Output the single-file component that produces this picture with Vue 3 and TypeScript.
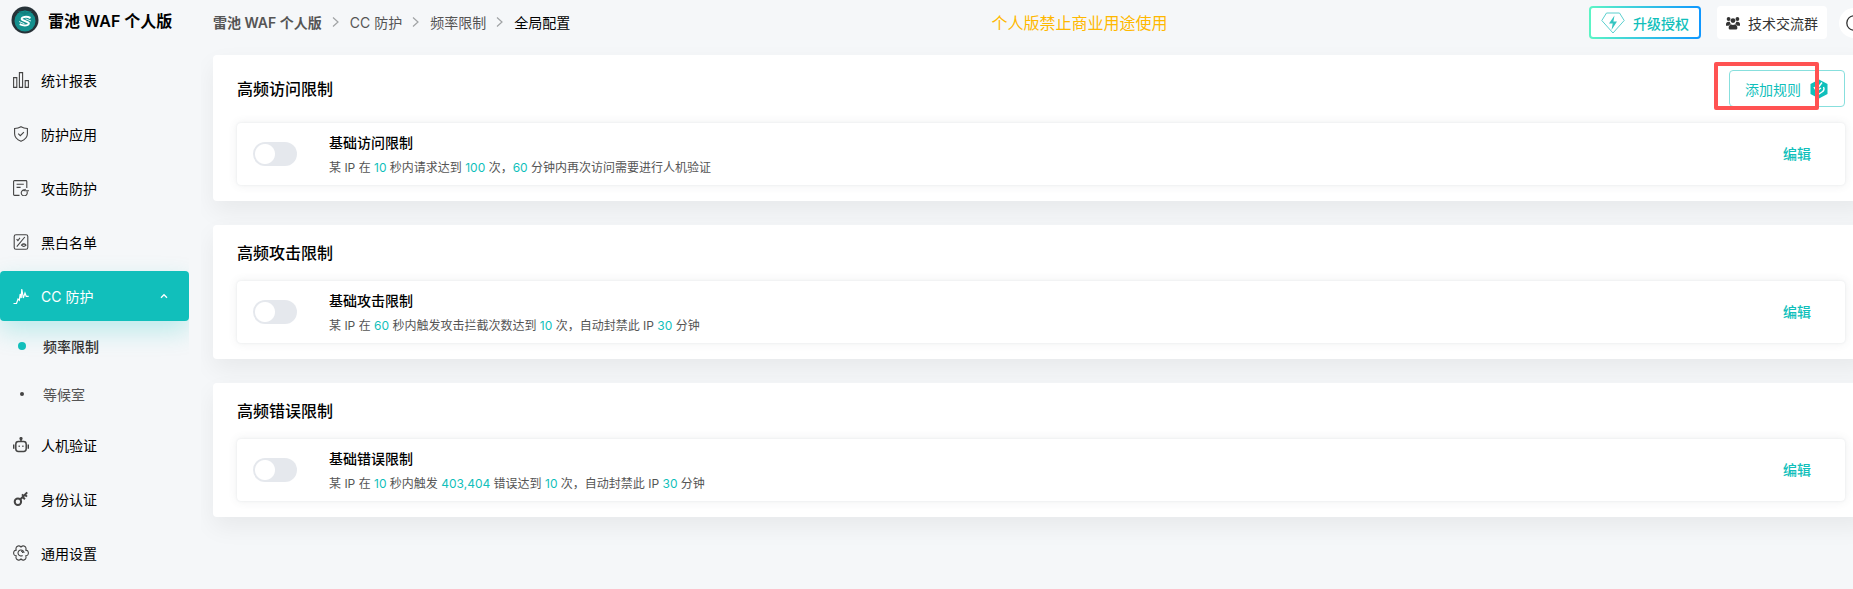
<script setup lang="ts">
import { ref } from 'vue'

interface NavItem {
  label: string
  icon: string
  active?: boolean
  children?: { label: string; current: boolean }[]
}
interface Part {
  text: string
  hot?: boolean
}
interface Rule {
  id: string
  title: string
  name: string
  parts: Part[]
  addable?: boolean
}

const nav: NavItem[] = [
  { label: '统计报表', icon: 'chart' },
  { label: '防护应用', icon: 'shield' },
  { label: '攻击防护', icon: 'attack' },
  { label: '黑白名单', icon: 'list' },
  {
    label: 'CC 防护',
    icon: 'pulse',
    active: true,
    children: [
      { label: '频率限制', current: true },
      { label: '等候室', current: false },
    ],
  },
  { label: '人机验证', icon: 'robot' },
  { label: '身份认证', icon: 'key' },
  { label: '通用设置', icon: 'gear' },
]

const crumbs: string[] = ['雷池 WAF 个人版', 'CC 防护', '频率限制']

const rules: Rule[] = [
  {
    id: 'visit',
    title: '高频访问限制',
    name: '基础访问限制',
    addable: true,
    parts: [
      { text: '某 IP 在 ' },
      { text: '10', hot: true },
      { text: ' 秒内请求达到 ' },
      { text: '100', hot: true },
      { text: ' 次，' },
      { text: '60', hot: true },
      { text: ' 分钟内再次访问需要进行人机验证' },
    ],
  },
  {
    id: 'attack',
    title: '高频攻击限制',
    name: '基础攻击限制',
    parts: [
      { text: '某 IP 在 ' },
      { text: '60', hot: true },
      { text: ' 秒内触发攻击拦截次数达到 ' },
      { text: '10', hot: true },
      { text: ' 次，自动封禁此 IP ' },
      { text: '30', hot: true },
      { text: ' 分钟' },
    ],
  },
  {
    id: 'error',
    title: '高频错误限制',
    name: '基础错误限制',
    parts: [
      { text: '某 IP 在 ' },
      { text: '10', hot: true },
      { text: ' 秒内触发 ' },
      { text: '403,404', hot: true },
      { text: ' 错误达到 ' },
      { text: '10', hot: true },
      { text: ' 次，自动封禁此 IP ' },
      { text: '30', hot: true },
      { text: ' 分钟' },
    ],
  },
]

const enabled = ref<Record<string, boolean>>({ visit: false, attack: false, error: false })
</script>

<template>
  <div class="app">
    <aside class="sidebar">
      <div class="brand">
        <svg class="logo" viewBox="0 0 28 28" aria-hidden="true">
          <circle cx="14" cy="14" r="13.5" fill="#263238" />
          <circle cx="14" cy="15" r="10.5" fill="#14908e" />
          <path d="M7 5.200q4 .2 5.500 1.300L14 4l1.500 2.500Q17 5.400 21 5.200q-2 2.600-5 2.800L14 10l-2-2q-3-.2-5-2.800z" fill="#13807f" />
          <path d="M19.500 12q-4-2-7.500-.6-2.300 1.200-.6 2.500l5.600 2.500q1.900 1.200-.3 2.400-3.300 1.500-8-.7" fill="none" stroke="#fff" stroke-width="2" />
          <path d="M8 15.500l5.500 2.300M14.500 12.800l5.500 2.200" stroke="#d8f3f2" stroke-width="1" />
        </svg>
        <span>雷池 WAF 个人版</span>
      </div>
      <nav>
        <template v-for="item in nav" :key="item.label">
          <a href="#" class="nav-item" :class="{ active: item.active }">
            <svg class="nav-icon" viewBox="0 0 16 16" aria-hidden="true">
              <g v-if="item.icon === 'chart'">
                <path d="M.6 5.600h3.200v9.800H.6zM6.400.6h3.200v14.800H6.400zM12.200 8.600h3.200v6.800h-3.200z" />
              </g>
              <g v-else-if="item.icon === 'shield'">
                <path d="M8 .7c2 1.200 4 1.700 6.400 1.800v5.300c0 3.600-2.600 6-6.400 7.500-3.800-1.500-6.400-3.900-6.400-7.500V2.500C4 2.400 6 1.900 8 .7z" />
                <path d="M5.200 7.600l2.100 2.100 3.600-3.600" />
              </g>
              <g v-else-if="item.icon === 'attack'">
                <path d="M13.800 8V1.500a.9.900 0 0 0-.9-.9H1.500a.9.900 0 0 0-.9.900v13a.9.900 0 0 0 .9.900H6.500M3.600 4.200h7.200M3.600 7.400h4" />
                <path d="M13.900 11.500a3 3 0 1 1-2.400-1.600M10.800 11.200l1.800-2.200M12.200 10.700h3.800" />
              </g>
              <g v-else-if="item.icon === 'list'">
                <rect x="1.200" y=".7" width="13.600" height="14.600" rx="1.800" />
                <path d="M3.800 12.600L11.800 3M3.600 5.200l1.300 1.500 2-2.800" />
                <path d="M8.500 11.200q2.200-2.600 4.500 0-2.300 2.600-4.500 0zM10.700 11.100h.1" />
              </g>
              <g v-else-if="item.icon === 'pulse'" class="spikes">
                <path d="M.5 15.500h3L5 11l1.300 1.200L7.200 6l1 4L8.800 1l1.500 9 1.700-5 1.200 3.300h2.500" />
              </g>
              <g v-else-if="item.icon === 'robot'" class="bold">
                <rect x="2.800" y="4.600" width="10.400" height="9.800" rx="2.600" />
                <path d="M8 4.600V1.500M.7 7.500v4.200M15.300 7.500v4.200M5.600 9.300h1.200M9.300 9.300h1.200" />
                <circle cx="8" cy="1.600" r=".9" />
              </g>
              <g v-else-if="item.icon === 'key'" class="heavy">
                <circle cx="4.900" cy="10.800" r="3.200" />
                <path d="M7.200 8.500L14.200 1.400M9.700 6l2.200 2.200M12 3.700l1.900 1.900M9 3.400l1 1" />
              </g>
              <g v-else>
                <path d="M4.900 1.100q1.500-.6 3.100.9 1.600-1.500 3.100-.9l1.400.9q.9 1.300.3 3.100 2.200.4 2.500 1.900v2q-.3 1.500-2.500 1.900.6 1.800-.3 3.100l-1.400.9q-1.500.6-3.100-.9-1.600 1.500-3.100.9L3.500 14q-.9-1.300-.3-3.100Q1 10.500.7 9V7Q1 5.500 3.200 5.100q-.6-1.800.3-3.100z" />
                <path d="M9.600 10.500A3 3 0 1 1 11 8M8 6.300q1.700 0 1.700 1.700" />
              </g>
            </svg>
            <span class="nav-label">{{ item.label }}</span>
            <svg v-if="item.children" class="caret" viewBox="0 0 8 6" aria-hidden="true">
              <path d="M1 4.700L4 1.700l3 3" fill="none" stroke="#fff" stroke-width="1.300" />
            </svg>
          </a>
          <div v-if="item.children" class="sub">
            <a v-for="child in item.children" :key="child.label" href="#" class="sub-item" :class="{ current: child.current }">
              <span class="dot"></span>
              <span>{{ child.label }}</span>
            </a>
          </div>
        </template>
      </nav>
    </aside>

    <main class="main">
      <header class="topbar">
        <div class="crumbs">
          <template v-for="(crumb, i) in crumbs" :key="crumb">
            <a href="#" class="crumb" :class="{ root: i === 0 }">{{ crumb }}</a>
            <svg class="sep" viewBox="0 0 8 12" aria-hidden="true">
              <path d="M1 1.500L6 6l-5 4.500" fill="none" stroke="#a0a3a5" stroke-width="1.200" />
            </svg>
          </template>
          <span class="here">全局配置</span>
        </div>
        <div class="notice">个人版禁止商业用途使用</div>
        <div class="actions">
          <button type="button" class="upgrade">
            <svg viewBox="0 0 24 22" aria-hidden="true">
              <path d="M5.500 1h13L23.200 8.500 12 21 .8 8.500z" fill="none" stroke="#5bcfce" />
              <path d="M13.500 3.500L8 11.500h3.700L10.500 18 16 9.600h-3.600z" fill="#35c5c1" />
            </svg>
            <span>升级授权</span>
          </button>
          <button type="button" class="group">
            <svg viewBox="0 0 14 14" aria-hidden="true">
              <circle cx="2.600" cy="3" r="1.900" />
              <circle cx="11.400" cy="3" r="1.900" />
              <circle cx="7" cy="4.600" r="2.400" />
              <path d="M0 8.300q0-2.600 2.600-2.600h1.100Q4 7.500 5.200 8.200 3.200 8.500 2.600 9.700H0zM14 8.300q0-2.600-2.600-2.600h-1.100Q10 7.500 8.800 8.200q2 .3 2.600 1.500H14zM2.700 12.500V11q.3-2.200 2.600-2.400 1.700.8 3.400 0 2.300.2 2.600 2.400v1.500q-.2 1-1.200 1H3.900q-1 0-1.200-1z" />
            </svg>
            <span>技术交流群</span>
          </button>
          <button type="button" class="help" aria-label="帮助">
            <svg viewBox="0 0 16 16" aria-hidden="true">
              <circle cx="8" cy="8" r="7.200" fill="none" stroke="#333" stroke-width="1.300" />
            </svg>
          </button>
        </div>
      </header>

      <section v-for="rule in rules" :key="rule.id" class="card">
        <div class="card-head">
          <h2>{{ rule.title }}</h2>
          <div v-if="rule.addable" class="add-wrap">
            <button type="button" class="add">
              <span>添加规则</span>
              <svg viewBox="0 0 18 20" aria-hidden="true">
                <path d="M9 .5L17.500 5v10L9 19.500.5 15V5z" fill="#0fbfbb" />
                <path d="M12 3.500L7.500 9.500M13.500 8q1.500 3-1.500 5L7.500 16M4 8l2.500 4L11 9" fill="none" stroke="#fff" stroke-width="1.400" />
              </svg>
            </button>
            <span class="marker"></span>
          </div>
        </div>
        <div class="row">
          <input :id="rule.id" v-model="enabled[rule.id]" type="checkbox" class="switch" role="switch" />
          <div class="info">
            <label class="name" :for="rule.id">{{ rule.name }}</label>
            <p class="desc"><span v-for="(part, i) in rule.parts" :key="i" :class="{ hot: part.hot }">{{ part.text }}</span></p>
          </div>
          <button type="button" class="edit">编辑</button>
        </div>
      </section>
    </main>
  </div>
</template>

<style>
body {
  background: #f5f7f9;
}
</style>

<style scoped>
.app {
  display: flex;
  min-height: 100vh;
  overflow: hidden;
  background: #f5f7f9;
  color: #000;
  font-family: Inter, "Noto Sans CJK SC", sans-serif;
  font-size: 14px;
}
a {
  color: inherit;
  text-decoration: none;
}
button {
  margin: 0;
  border: 0;
  padding: 0;
  background: none;
  font: inherit;
  color: inherit;
  cursor: pointer;
}
svg {
  display: block;
  flex: none;
}

.sidebar {
  flex: none;
  width: 189px;
  overflow: hidden;
}
.brand {
  display: flex;
  align-items: center;
  gap: 9px;
  height: 39px;
  margin-bottom: 16px;
  padding-left: 11px;
  font-size: 16px;
  font-weight: 600;
  white-space: nowrap;
}
.logo {
  width: 28px;
  height: 28px;
}
.nav-item {
  display: flex;
  align-items: center;
  height: 50px;
  margin-bottom: 4px;
  padding: 0 21px 0 13px;
  border-radius: 4px;
}
.nav-icon {
  width: 16px;
  height: 16px;
  margin-right: 12px;
  fill: none;
  stroke: #444;
  stroke-width: 1.1;
}
.bold {
  stroke-width: 1.5;
}
.heavy {
  stroke-width: 2;
}
.spikes {
  stroke-width: 1.2;
}
.nav-label {
  flex: 1;
}
.nav-item.active {
  margin-bottom: 0;
  background: #11bfbb;
  color: #fff;
  box-shadow: 0 10px 25px rgba(15, 198, 194, 0.25);
}
.active .nav-icon {
  stroke: #fff;
}
.caret {
  width: 8px;
  height: 6px;
}
.sub {
  padding: 1px 0 2px;
}
.sub-item {
  display: flex;
  align-items: center;
  height: 48px;
  color: #555;
}
.dot {
  width: 4px;
  height: 4px;
  margin: 0 19px 0 20px;
  border-radius: 50%;
  background: #444;
}
.sub-item.current {
  color: #333;
  font-weight: 500;
}
.current .dot {
  width: 8px;
  height: 8px;
  margin: 0 17px 0 18px;
  background: #11bfbb;
}

.main {
  flex: 1;
  min-width: 0;
  margin: 0 -16px 0 12px;
  padding: 0 0 32px 12px;
  overflow: hidden;
}
.topbar {
  display: flex;
  align-items: center;
  justify-content: space-between;
  height: 45px;
  margin-bottom: 10px;
  white-space: nowrap;
}
.crumbs {
  display: flex;
  align-items: center;
  padding-bottom: 2px;
  color: #555;
}
.root {
  font-weight: 600;
}
.here {
  color: #000;
}
.sep {
  width: 8px;
  height: 12px;
  margin: 0 10px;
}
.notice {
  padding-bottom: 2px;
  color: #ffb800;
  font-size: 16px;
}
.actions {
  display: flex;
  align-items: center;
  gap: 16px;
}
.upgrade {
  display: flex;
  align-items: center;
  justify-content: center;
  gap: 8px;
  box-sizing: border-box;
  width: 112px;
  height: 33px;
  border: 2px solid transparent;
  border-radius: 4px;
  background:
    linear-gradient(#fff, #fff) padding-box,
    linear-gradient(90deg, #5cf5c5, #0f97ff) border-box;
  color: #11bfbb;
  font-weight: 500;
}
.upgrade svg {
  width: 24px;
  height: 22px;
}
.group {
  display: flex;
  align-items: center;
  justify-content: center;
  gap: 8px;
  width: 110px;
  height: 33px;
  border-radius: 4px;
  background: #fff;
  color: #333;
}
.group svg {
  width: 14px;
  height: 14px;
  fill: #333;
}
.help {
  display: flex;
  align-items: center;
  justify-content: center;
  width: 30px;
  height: 30px;
  margin-left: -4px;
  border-radius: 50%;
  background: #fff;
}
.help svg {
  width: 16px;
  height: 16px;
}

.card {
  margin-bottom: 24px;
  padding: 15px 24px 16px;
  border-radius: 4px;
  background: #fff;
  box-shadow: 0 10px 25px rgba(20, 20, 20, 0.06);
}
.card-head {
  display: flex;
  align-items: center;
  justify-content: space-between;
  min-height: 25px;
  margin-bottom: 16px;
}
h2 {
  margin: 0;
  font-size: 16px;
  font-weight: 500;
  line-height: 24px;
}
.add-wrap {
  position: relative;
}
.add {
  display: flex;
  align-items: center;
  justify-content: space-between;
  box-sizing: border-box;
  width: 116px;
  height: 37px;
  padding: 0 16px 0 15px;
  border: 1px solid #87dfdd;
  border-radius: 4px;
  color: #11bfbb;
}
.add svg {
  width: 18px;
  height: 20px;
}
.marker {
  position: absolute;
  top: -8px;
  left: -15px;
  box-sizing: border-box;
  width: 105px;
  height: 48px;
  border: 4px solid #ff5252;
  border-radius: 2px;
  pointer-events: none;
}
.row {
  display: flex;
  align-items: center;
  box-sizing: border-box;
  min-height: 62px;
  padding: 7px 34px 7px 16px;
  border-radius: 4px;
  box-shadow:
    0 0 10px rgba(68, 80, 91, 0.1),
    0 0 2px rgba(68, 80, 91, 0.1);
}
.switch {
  appearance: none;
  flex: none;
  width: 44px;
  height: 24px;
  margin: 0 32px 0 0;
  border-radius: 12px;
  background: radial-gradient(circle at 12px 12px, #fff 0 9.5px, #e5e8ed 10.5px);
  cursor: pointer;
}
.switch:checked {
  background: radial-gradient(circle at 32px 12px, #fff 0 9.5px, #11bfbb 10.5px);
}
.info {
  flex: 1;
  min-width: 0;
  padding-top: 2px;
}
.name {
  display: block;
  font-weight: 500;
  line-height: 22px;
}
.desc {
  margin: 4px 0 0;
  color: #555;
  font-size: 12px;
  line-height: 20px;
}
.hot {
  color: #11bfbb;
}
.edit {
  padding-bottom: 2px;
  color: #11bfbb;
  font-weight: 500;
}
</style>
